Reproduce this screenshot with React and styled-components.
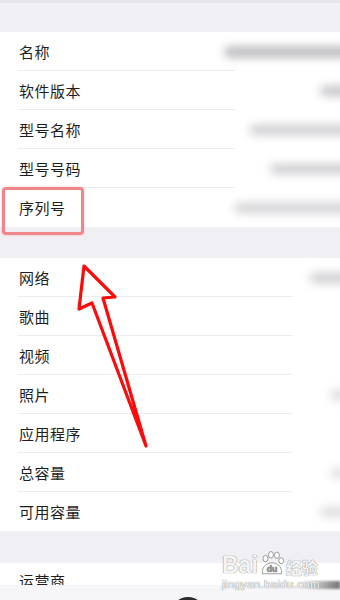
import React from "react";
import styled, { createGlobalStyle } from "styled-components";

const Global = createGlobalStyle`
  html, body { margin: 0; padding: 0; background: #efeff4; }
  body { font-family: "Noto Sans CJK SC", "Noto Sans", sans-serif; }
`;

const Screen = styled.div`
  position: relative;
  width: 340px;
  height: 600px;
  overflow: hidden;
  background: #efeff4;
  display: flex;
  flex-direction: column;
`;

const TopEdge = styled.div`
  height: 3px;
  background: #e6e6ea;
  flex: none;
`;

const Spacer = styled.div`
  height: ${(p) => p.$h}px;
  flex: none;
`;

const Group = styled.div`
  background: #ffffff;
  display: flex;
  flex-direction: column;
  flex: none;
`;

const Row = styled.div`
  position: relative;
  height: 39px;
  display: flex;
  align-items: center;
  justify-content: space-between;
  padding-left: 19px;
  &::after {
    content: "";
    position: absolute;
    left: 18px;
    bottom: 0;
    width: ${(p) => (p.$last ? 0 : p.$lineEnd - 18)}px;
    height: 1px;
    background: #ececee;
  }
`;

const Label = styled.span`
  font-size: 15px;
  color: #1e1e1e;
  letter-spacing: 0.5px;
`;

const Value = styled.span`
  height: 10px;
  width: ${(p) => p.$w}px;
  margin-right: -14px;
  background: #9c9ca2;
  opacity: ${(p) => p.$o};
  border-radius: 5px;
  filter: blur(5px);
`;

const Tail = styled.div`
  height: 22px;
  background: #ffffff;
  padding-left: 19px;
  overflow: hidden;
  flex: none;
`;

const TailLabel = styled(Label)`
  display: block;
  line-height: 36px;
`;

const BottomBar = styled.div`
  flex: 1;
  background: #f6f6f8;
  display: flex;
  justify-content: center;
`;

const HomeDot = styled.div`
  margin-top: 12px;
  margin-left: 36px;
  width: 34px;
  height: 34px;
  border-radius: 50%;
  background: #2b2b2d;
`;

const Highlight = styled.div`
  position: absolute;
  left: 2px;
  top: 187px;
  width: 76px;
  height: 42px;
  border: 3px solid #f0858a;
  border-radius: 4px;
  box-shadow: 0 0 2px rgba(240, 120, 125, 0.6);
`;

const ArrowSvg = styled.svg`
  position: absolute;
  left: 0;
  top: 0;
  pointer-events: none;
`;

const Watermark = styled.div`
  position: absolute;
  left: 222px;
  top: 551px;
  display: flex;
  flex-direction: column;
  color: rgba(255, 255, 255, 0.93);
  text-shadow: 0 0 1px #8f8f8f, 0 0 1px #8f8f8f;
  font-family: "Liberation Sans", sans-serif;
`;

const WmTop = styled.div`
  display: flex;
  align-items: flex-end;
  gap: 1px;
  font-size: 23px;
  font-weight: 700;
  line-height: 24px;
`;

const WmCn = styled.span`
  font-family: "Noto Sans CJK SC", sans-serif;
  font-size: 16px;
  font-weight: 700;
  line-height: 20px;
`;

const WmUrl = styled.div`
  font-size: 11.5px;
  line-height: 14px;
  letter-spacing: 0.3px;
`;

const Shade = styled.div`
  position: absolute;
  left: 300px;
  top: 581px;
  width: 40px;
  height: 8px;
  background: linear-gradient(90deg, rgba(90,90,90,0), rgba(60,60,60,0.7));
  filter: blur(1px);
`;

const group1 = [
  { t: "名称", w: 130, o: 0.75 },
  { t: "软件版本", w: 34, o: 0.6 },
  { t: "型号名称", w: 104, o: 0.5 },
  { t: "型号号码", w: 84, o: 0.5 },
  { t: "序列号", w: 120, o: 0.45 },
];

const group2 = [
  { t: "网络", w: 44, o: 0.5 },
  { t: "歌曲", w: 0, o: 0 },
  { t: "视频", w: 0, o: 0 },
  { t: "照片", w: 24, o: 0.35 },
  { t: "应用程序", w: 0, o: 0 },
  { t: "总容量", w: 24, o: 0.3 },
  { t: "可用容量", w: 34, o: 0.35 },
];

function Arrow() {
  return (
    <ArrowSvg width="340" height="600" viewBox="0 0 340 600">
      <path
        d="M84 266 L115 297 L103 298 L146 446 L92 303 L79 309 Z"
        fill="none"
        stroke="#ff0a0a"
        strokeWidth="3.2"
        strokeLinejoin="round"
      />
    </ArrowSvg>
  );
}

function Paw() {
  return (
    <svg width="26" height="26" viewBox="0 0 24 24">
      <g fill="rgba(255,255,255,0.93)" stroke="#8f8f8f" strokeWidth="0.8">
        <ellipse cx="6" cy="7" rx="2.3" ry="3" />
        <ellipse cx="11" cy="3.5" rx="2.3" ry="3" />
        <ellipse cx="16.5" cy="4" rx="2.3" ry="3" />
        <ellipse cx="20.5" cy="9" rx="2.2" ry="2.8" />
        <path d="M3 21 C3 13 8 11 12 11 C16 11 21 13 21 21 Z" />
      </g>
      <text x="12" y="19.5" fontSize="8" textAnchor="middle" fill="#8f8f8f" fontFamily="Liberation Sans" fontWeight="700">du</text>
    </svg>
  );
}

export default function App() {
  return (
    <>
      <Global />
      <Screen>
        <TopEdge />
        <Spacer $h={29} />
        <Group>
          {group1.map((r, i) => (
            <Row key={r.t} $lineEnd={235} $last={i === group1.length - 1}>
              <Label>{r.t}</Label>
              {r.w > 0 && <Value $w={r.w} $o={r.o} />}
            </Row>
          ))}
        </Group>
        <Spacer $h={31} />
        <Group>
          {group2.map((r, i) => (
            <Row key={r.t} $lineEnd={292} $last={i === group2.length - 1}>
              <Label>{r.t}</Label>
              {r.w > 0 && <Value $w={r.w} $o={r.o} />}
            </Row>
          ))}
        </Group>
        <Spacer $h={32} />
        <Tail>
          <TailLabel>运营商</TailLabel>
        </Tail>
        <BottomBar>
          <HomeDot />
        </BottomBar>
        <Highlight />
        <Arrow />
        <Shade />
        <Watermark>
          <WmTop>
            <span>Bai</span>
            <Paw />
            <WmCn>经验</WmCn>
          </WmTop>
          <WmUrl>jingyan.baidu.com</WmUrl>
        </Watermark>
      </Screen>
    </>
  );
}
